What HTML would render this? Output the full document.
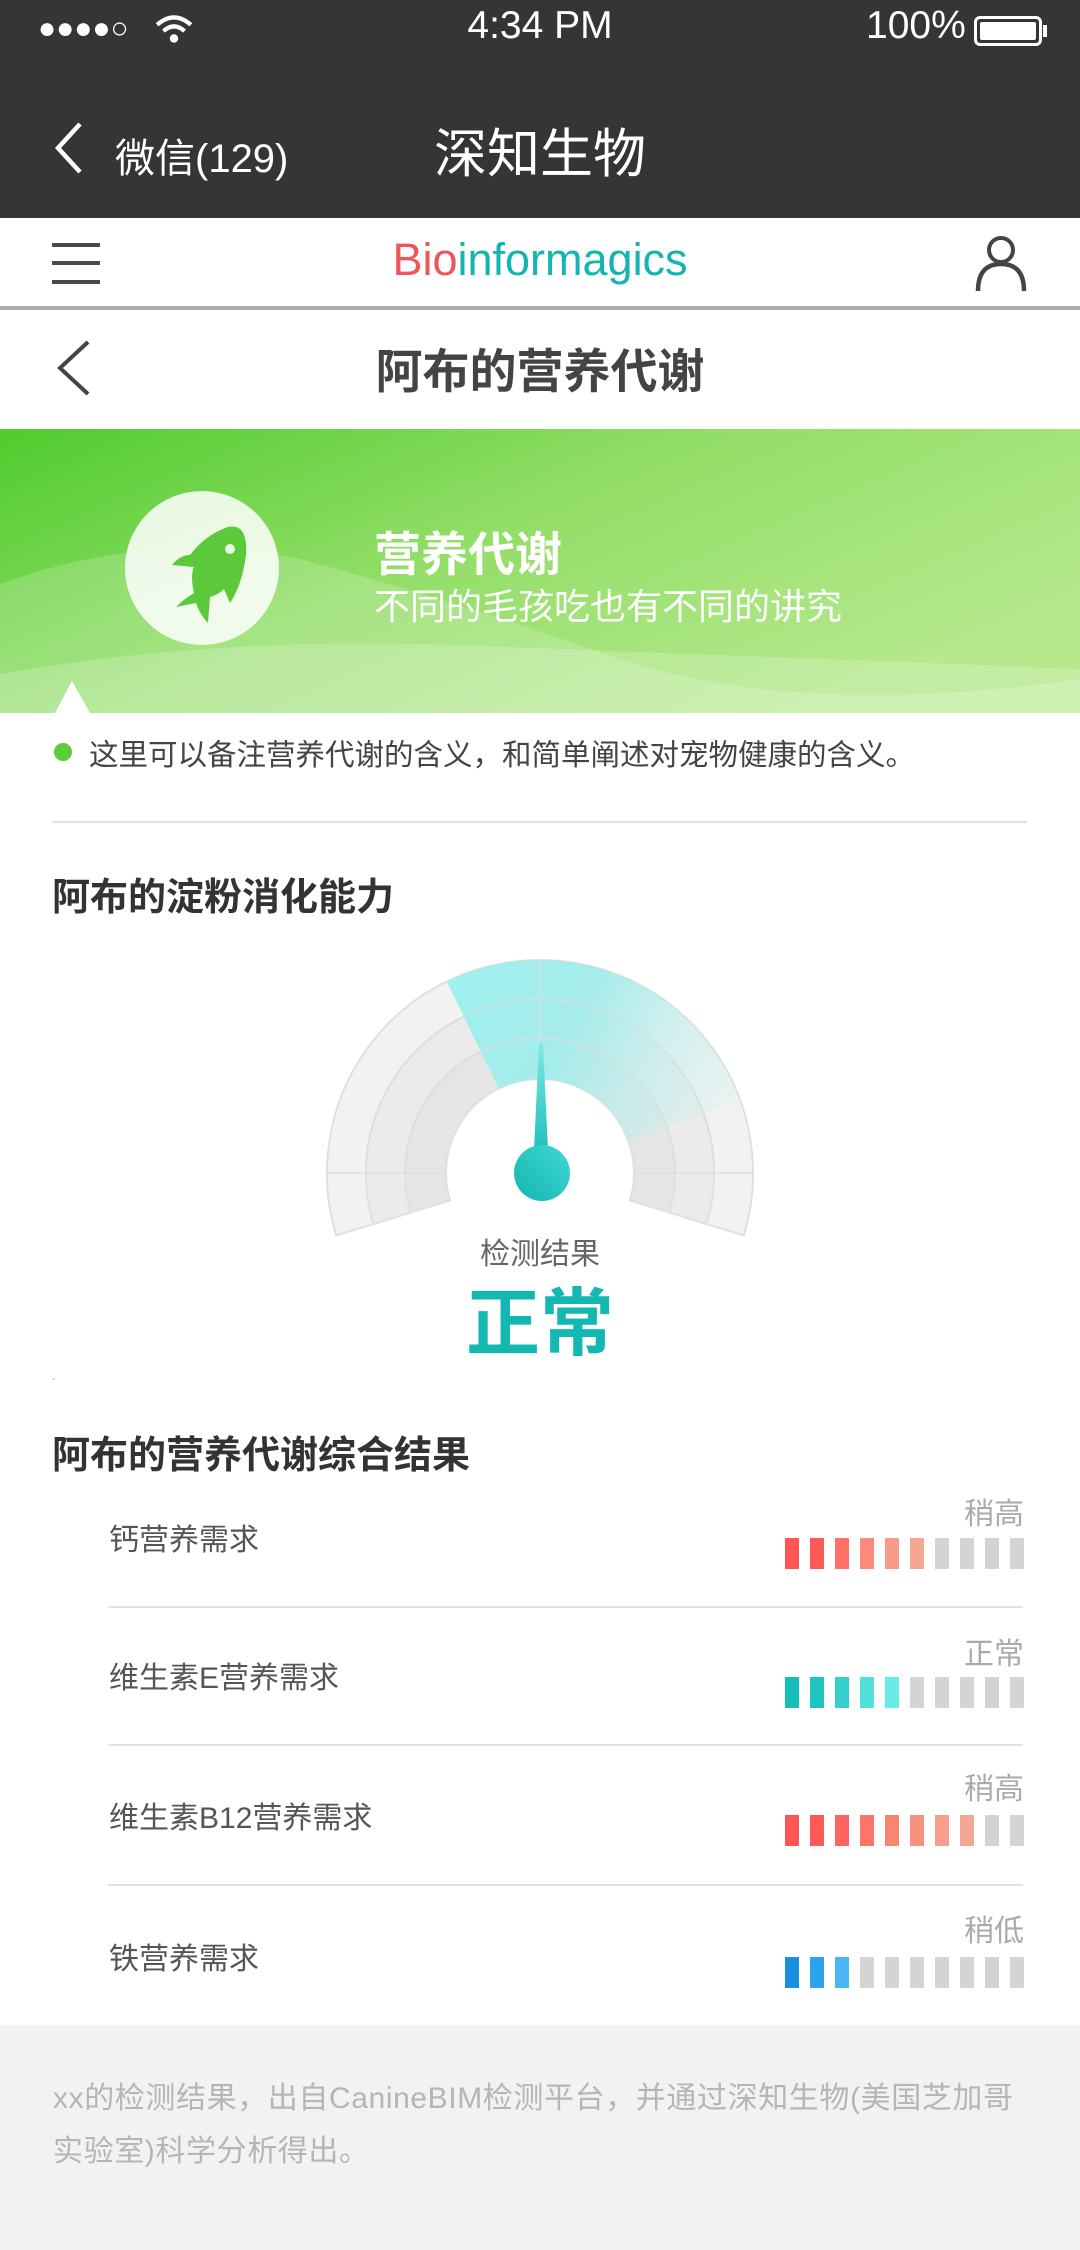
<!DOCTYPE html>
<html><head><meta charset="utf-8"><style>
*{margin:0;padding:0;box-sizing:border-box}
body{width:1080px;height:2250px;position:relative;background:#fff;font-family:"Liberation Sans","Noto Sans CJK SC",sans-serif;overflow:hidden}
.a{position:absolute;white-space:nowrap}
.bar{position:absolute;width:14px;height:31px}
</style></head><body>
<div class="a" style="left:0;top:0;width:1080px;height:218px;background:#353535"></div>
<div class="a" style="left:38px;top:12px;color:#fff;font-size:30px;letter-spacing:0px">●●●●○</div>
<svg class="a" style="left:155px;top:14px" width="38" height="30" viewBox="0 0 36 28"><path d="M2 10 Q18 -4 34 10" stroke="#fff" stroke-width="4" fill="none"/><path d="M8 16 Q18 7 28 16" stroke="#fff" stroke-width="4" fill="none"/><circle cx="18" cy="23" r="4" fill="#fff"/></svg>
<div class="a" style="left:0;width:1080px;text-align:center;top:4px;color:#fff;font-size:39px">4:34 PM</div>
<div class="a" style="left:866px;top:4px;color:#fff;font-size:39px">100%</div>
<div class="a" style="left:974px;top:16px;width:68px;height:30px;border:3px solid #fff;border-radius:6px;padding:3px"><div style="background:#fff;width:100%;height:100%;border-radius:2px"></div></div>
<div class="a" style="left:1043px;top:25px;width:4px;height:12px;background:#fff"></div>
<svg class="a" style="left:52px;top:120px" width="34" height="56"><path d="M28 4 L6 28 L28 52" stroke="#fff" stroke-width="4.5" fill="none"/></svg>
<div class="a" style="left:115px;top:126px;color:#fff;font-size:40px">微信(129)</div>
<div class="a" style="left:0;width:1080px;text-align:center;top:112px;color:#fff;font-size:53px">深知生物</div>

<div class="a" style="left:0;top:306px;width:1080px;height:4px;background:#aaa"></div>
<div class="a" style="left:52px;top:243px;height:4px;background:#4a4a4a;width:48px"></div>
<div class="a" style="left:52px;top:261px;width:48px;height:4px;background:#4a4a4a"></div>
<div class="a" style="left:52px;top:280px;width:48px;height:4px;background:#4a4a4a"></div>
<div class="a" style="left:0;width:1080px;text-align:center;top:234px;font-size:45px;color:#13b5b1"><span style="color:#f0555a">Bio</span>informagics</div>
<svg class="a" style="left:974px;top:234px" width="54" height="58"><circle cx="27" cy="16" r="12" stroke="#444" stroke-width="4" fill="none"/><path d="M4 57 Q4 30 27 30 Q50 30 50 57" stroke="#444" stroke-width="4.5" fill="none"/></svg>

<svg class="a" style="left:52px;top:338px" width="40" height="60"><path d="M36 4 L8 30 L36 56" stroke="#444" stroke-width="4" fill="none"/></svg>
<div class="a" style="left:0;width:1080px;text-align:center;top:333px;font-size:47px;font-weight:bold;color:#444">阿布的营养代谢</div>

<svg class="a" style="left:0;top:429px" width="1080" height="284">
<defs><linearGradient id="bg" x1="0" y1="0" x2="1" y2="0.6"><stop offset="0" stop-color="#50cb2e"/><stop offset="0.5" stop-color="#93de68"/><stop offset="1" stop-color="#b5e98c"/></linearGradient></defs>
<rect width="1080" height="284" fill="url(#bg)"/>
<path d="M0 155 Q150 100 300 130 Q450 170 620 230 Q800 290 1080 250 L1080 284 L0 284Z" fill="#fff" opacity="0.18"/>
<path d="M0 245 Q200 210 420 215 Q700 225 1080 240 L1080 284 L0 284Z" fill="#fff" opacity="0.2"/>
<path d="M55 284 L72 252 L90 284Z" fill="#fff"/>
</svg>
<div class="a" style="left:125px;top:491px;width:154px;height:154px;border-radius:50%;background:rgba(255,255,255,0.85)"></div>
<svg class="a" style="left:150px;top:515px" width="110" height="110" viewBox="0 0 110 110"><path d="M78 12 Q98 8 96 40 Q92 70 80 88 L74 74 Q68 80 60 82 L58 108 Q50 100 46 88 L26 92 Q34 84 44 78 Q40 60 44 52 L22 50 Q30 40 40 40 Q55 20 78 12Z" fill="#5cc93a"/><circle cx="80" cy="34" r="5" fill="#e8f6e2"/></svg>
<div class="a" style="left:374px;top:516px;color:#fff;font-size:47px;font-weight:bold">营养代谢</div>
<div class="a" style="left:374px;top:578px;color:#fff;font-size:36px">不同的毛孩吃也有不同的讲究</div>

<div class="a" style="left:54px;top:743px;width:18px;height:18px;border-radius:50%;background:#5ccb38"></div>
<div class="a" style="left:89px;top:732px;font-size:29.5px;color:#444">这里可以备注营养代谢的含义，和简单阐述对宠物健康的含义。</div>
<div class="a" style="left:52px;top:821px;width:975px;height:2px;background:#e2e2e2"></div>
<div class="a" style="left:52px;top:866px;font-size:38px;font-weight:bold;color:#333">阿布的淀粉消化能力</div>

<svg class="a" style="left:0;top:0" width="1080" height="1400">
<defs>
<linearGradient id="cy" gradientUnits="userSpaceOnUse" x1="450" y1="1000" x2="760" y2="1160"><stop offset="0" stop-color="#9ff0ee"/><stop offset="0.35" stop-color="#a2ecea" stop-opacity="0.95"/><stop offset="1" stop-color="#d9f2f1" stop-opacity="0"/></linearGradient>
<linearGradient id="nd" x1="0" y1="1" x2="1" y2="0"><stop offset="0" stop-color="#13b6b1"/><stop offset="1" stop-color="#42d8d3"/></linearGradient>
<linearGradient id="nl" x1="0" y1="0" x2="0" y2="1"><stop offset="0" stop-color="#7ee9e5"/><stop offset="1" stop-color="#1fc2bd"/></linearGradient>
</defs>
<g stroke="#e0e0e0" stroke-width="2">
<path d="M743.7 1235.3 A213 213 0 1 0 336.3 1235.3 L373.6 1224.1 A174 174 0 1 1 706.4 1224.1Z" fill="#f2f2f2"/>
<path d="M706.4 1224.1 A174 174 0 1 0 373.6 1224.1 L410.9 1212.5 A135 135 0 1 1 669.1 1212.5Z" fill="#ebebeb"/>
<path d="M669.1 1212.5 A135 135 0 1 0 410.9 1212.5 L450.1 1200.5 A94 94 0 1 1 629.9 1200.5Z" fill="#e5e5e5"/>
</g>
<path d="M446.7 981.5 A213 213 0 0 1 740.2 1100.2 L628.4 1140.9 A94 94 0 0 0 498.8 1088.5Z" fill="url(#cy)"/>
<g stroke="#dedede" stroke-width="2" fill="none" opacity="0.7">
<path d="M327 1173 H446 M634 1173 H753 M540 960 V1079"/>
<path d="M366 1173 A174 174 0 0 1 714 1173 M405 1173 A135 135 0 0 1 675 1173"/>
</g>
<polygon points="539,1043 543,1043 548,1150 534,1150" fill="url(#nl)"/>
<circle cx="542" cy="1173" r="28" fill="url(#nd)"/>
</svg>
<div class="a" style="left:0;width:1080px;text-align:center;top:1229px;font-size:30px;color:#666">检测结果</div>
<div class="a" style="left:0;width:1080px;text-align:center;top:1264px;font-size:74px;font-weight:bold;color:#13b8b3">正常</div>
<div class="a" style="left:52px;top:1378px;width:3px;height:2px;background:#ddd"></div>
<div class="a" style="left:52px;top:1424px;font-size:38px;font-weight:bold;color:#333">阿布的营养代谢综合结果</div>

<div class="a" style="left:109px;top:1515px;font-size:30px;color:#555">钙营养需求</div>
<div class="a" style="left:964px;top:1489px;font-size:30px;color:#aaa">稍高</div>
<div class="a" style="left:108px;top:1606px;width:915px;height:2px;background:#e2e2e2"></div>
<div class="a" style="left:109px;top:1653px;font-size:30px;color:#555">维生素E营养需求</div>
<div class="a" style="left:964px;top:1629px;font-size:30px;color:#aaa">正常</div>
<div class="a" style="left:108px;top:1744px;width:915px;height:2px;background:#e2e2e2"></div>
<div class="a" style="left:109px;top:1793px;font-size:30px;color:#555">维生素B12营养需求</div>
<div class="a" style="left:964px;top:1764px;font-size:30px;color:#aaa">稍高</div>
<div class="a" style="left:108px;top:1884px;width:915px;height:2px;background:#e2e2e2"></div>
<div class="a" style="left:109px;top:1934px;font-size:30px;color:#555">铁营养需求</div>
<div class="a" style="left:964px;top:1906px;font-size:30px;color:#aaa">稍低</div>

<div id="bars"></div>
<script>
var rows=[[1538,["#ff5555","#ff5a58","#ff7066","#fb8a78","#f89b89","#f6a794"]],
[1677,["#15bdb8","#20c4bf","#35d0cb","#52e0dc","#66ebe6"]],
[1815,["#ff5555","#ff5a58","#ff6560","#fc7568","#f9846f","#f89280","#f79f8c","#f6a794"]],
[1957,["#1a8fe0","#2ea2ec","#4ab6f3"]]];
var h="";rows.forEach(function(r){for(var i=0;i<10;i++){h+='<div class="bar" style="left:'+(785+i*25)+'px;top:'+r[0]+'px;background:'+(r[1][i]||"#d4d4d4")+'"></div>';}});
document.getElementById("bars").innerHTML=h;
</script>

<div class="a" style="left:0;top:2025px;width:1080px;height:225px;background:#f2f2f2"></div>
<div class="a" style="left:53px;top:2072px;font-size:30px;color:#b5b5b5;line-height:53px;letter-spacing:0.6px">xx的检测结果，出自CanineBIM检测平台，并通过深知生物(美国芝加哥<br>实验室)科学分析得出。</div>
</body></html>
